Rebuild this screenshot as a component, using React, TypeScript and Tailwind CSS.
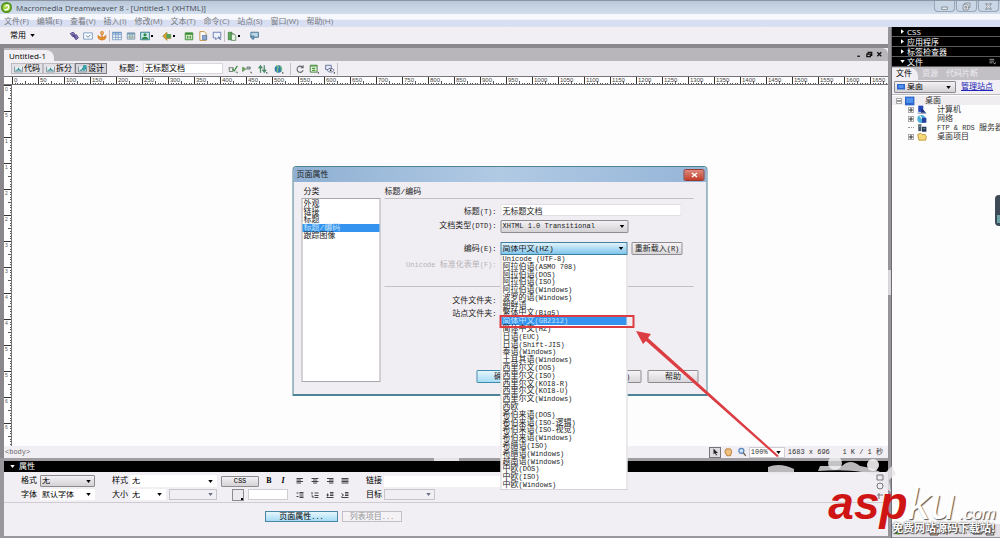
import { ReactNode } from 'react'
import clsx from 'clsx'

const menus = [
  '文件(F)',
  '编辑(E)',
  '查看(V)',
  '插入(I)',
  '修改(M)',
  '文本(T)',
  '命令(C)',
  '站点(S)',
  '窗口(W)',
  '帮助(H)',
]

const categories = ['外观', '链接', '标题', '标题/编码', '跟踪图像']

const encodings = [
  'Unicode (UTF-8)',
  '阿拉伯语(ASMO 708)',
  '阿拉伯语(DOS)',
  '阿拉伯语(ISO)',
  '阿拉伯语(Windows)',
  '波罗的语(Windows)',
  '朝鲜语',
  '繁体中文(Big5)',
  '简体中文(GB2312)',
  '简体中文(HZ)',
  '日语(EUC)',
  '日语(Shift-JIS)',
  '泰语(Windows)',
  '土耳其语(Windows)',
  '西里尔文(DOS)',
  '西里尔文(ISO)',
  '西里尔文(KOI8-R)',
  '西里尔文(KOI8-U)',
  '西里尔文(Windows)',
  '西欧',
  '希伯来语(DOS)',
  '希伯来语(ISO-逻辑)',
  '希伯来语(ISO-视觉)',
  '希伯来语(Windows)',
  '希腊语(ISO)',
  '希腊语(Windows)',
  '越南语(Windows)',
  '中欧(DOS)',
  '中欧(ISO)',
  '中欧(Windows)',
]

// Latin runs are set one size smaller than the Chinese ones
function Mixed({ children }: { children: string }) {
  return (
    <>
      {children.split(/([\x20-\x7e]+)/).map((part, i) =>
        i % 2 ? (
          <span key={i} className="text-[7px]">
            {part}
          </span>
        ) : (
          part
        ),
      )}
    </>
  )
}

function Icon({ children, className = 'size-[10px]' }: { children: ReactNode; className?: string }) {
  return (
    <svg viewBox="0 0 16 16" fill="none" className={clsx('shrink-0', className)} aria-hidden="true">
      {children}
    </svg>
  )
}

function IconButton({ label, children }: { label: string; children: ReactNode }) {
  return (
    <button aria-label={label} className="flex h-3 w-[14px] shrink-0 items-center justify-center">
      <Icon>{children}</Icon>
    </button>
  )
}

function Caret({ className = 'text-black' }: { className?: string }) {
  return (
    <svg viewBox="0 0 6 4" className={clsx('h-[3px] w-[5px] shrink-0', className)} aria-hidden="true">
      <path d="M0 0h6L3 4z" fill="currentColor" />
    </svg>
  )
}

function Dot() {
  return <span className="-ml-px mr-[7px] size-[2px] shrink-0 bg-black" />
}

function Select({
  id,
  label,
  options,
  className,
  fieldClass = 'border-transparent bg-white',
  disabled,
}: {
  id: string
  label?: string
  options: string[]
  className: string
  fieldClass?: string
  disabled?: boolean
}) {
  return (
    <div className={clsx('relative shrink-0', className)}>
      <select
        id={id}
        aria-label={label}
        disabled={disabled}
        className={clsx('block size-full appearance-none border pl-px leading-none', fieldClass)}
      >
        {options.map((o) => (
          <option key={o}>{o}</option>
        ))}
      </select>
      <span className="pointer-events-none absolute inset-y-0 right-1 flex items-center">
        <Caret className={disabled ? 'text-gray-500' : 'text-black'} />
      </span>
    </div>
  )
}

const grayField = 'border-[#8d8b8f] rounded-[1px] bg-linear-to-b from-[#f3f1f3] to-[#d5d2d6]'

function TitleBar() {
  return (
    <header className="flex h-[14px] shrink-0 items-center border-t border-[#8c96a3] bg-linear-to-b from-[#b9c8db] to-[#d3dfec] pl-px font-['Open_Sans','Noto_Sans',sans-serif] text-[8px] text-[#3f4854]">
      <Icon className="size-[11px]">
        <circle cx="8" cy="8" r="8" fill="#4f8f1c" />
        <circle cx="8" cy="8" r="5.5" fill="#a8d64a" />
        <path d="M5 11c4 1 7-1 6-6-2-1-4 0-4 2" stroke="#fff" strokeWidth="2" />
      </Icon>
      <h1 className="ml-1 flex-1">Macromedia Dreamweaver 8 - [Untitled-1 (XHTML)]</h1>
      <div className="flex gap-px self-start pr-px">
        <WindowButton label="最小化">
          <path d="M3 9h10v4H3z" />
        </WindowButton>
        <WindowButton label="还原">
          <path d="M5 5V2h9v8h-3M2 5h9v9H2zM5 8h3v3H5z" />
        </WindowButton>
        <WindowButton label="关闭">
          <path d="M3 3h3l2 3 2-3h3l-3 5 3 5h-3l-2-3-2 3H3l3-5z" />
        </WindowButton>
      </div>
    </header>
  )
}

function WindowButton({ label, children }: { label: string; children: ReactNode }) {
  return (
    <button
      aria-label={label}
      className="flex h-[11px] w-[21px] items-center justify-center rounded-b-sm border border-t-0 border-[#98a6b8] bg-[#c9d6e5]"
    >
      <Icon className="size-[9px]">
        <g fill="#fff" stroke="#6a7480" strokeWidth="1.4">
          {children}
        </g>
      </Icon>
    </button>
  )
}

function MenuBar() {
  return (
    <nav className="flex h-[13px] shrink-0 items-center gap-2 bg-linear-to-b from-[#f6f8fd] from-40% to-[#d9dff2] to-50% pl-1 font-['Open_Sans','Noto_Sans_CJK_SC',sans-serif] text-[8px] text-[#77797f]">
      {menus.map((m) => (
        <button key={m} className="whitespace-nowrap">
          {m}
        </button>
      ))}
    </nav>
  )
}

function Separator() {
  return <span className="h-3 w-px shrink-0 bg-[#c3c0c5]" />
}

function InsertBar() {
  return (
    <div className="flex h-[17px] shrink-0 items-center bg-[#f1eff3] pl-[10px] text-[8px]">
      <button className="flex w-[57px] items-center gap-1">
        常用 <Caret />
      </button>
      <IconButton label="超级链接">
        <path d="M2 4l5-2 3 4-4 3zM7 8l5-2 3 5-4 3z" fill="#9d8fc4" stroke="#4c3f86" strokeWidth="1.5" />
        <path d="M5 5l7 6" stroke="#4c3f86" strokeWidth="2" />
      </IconButton>
      <IconButton label="电子邮件链接">
        <path d="M1 3h14v10H1z" fill="#fff" stroke="#7b9cc4" strokeWidth="1.5" />
        <path d="M5 7l3 3 4-4" stroke="#4775ad" strokeWidth="1.5" />
      </IconButton>
      <IconButton label="命名锚记">
        <circle cx="8" cy="3" r="2" stroke="#d8832a" strokeWidth="2" />
        <path d="M8 5v8M2 8c0 8 12 8 12 0l-3 2H5z" stroke="#d8832a" strokeWidth="2" fill="#f0a541" />
      </IconButton>
      <Separator />
      <IconButton label="表格">
        <path d="M1 2h14v12H1zM1 6h14M1 10h14M6 2v12M10 2v12" fill="#fff" stroke="#6b93bd" strokeWidth="1.3" />
        <path d="M1 2h14v2H1z" fill="#5f8fc2" />
      </IconButton>
      <IconButton label="插入 Div 标签">
        <path d="M2 3h12v10H2z" fill="#dfe8ee" stroke="#6f8ba3" strokeWidth="1.3" />
        <path d="M2 3h12v3H2z" fill="#7aa0b8" />
        <path d="M5 8h6v3H5z" stroke="#58785c" />
      </IconButton>
      <IconButton label="图像">
        <path d="M1 2h14v12H1z" fill="#cfeae6" stroke="#347d92" strokeWidth="1.5" />
        <circle cx="8" cy="6" r="2.5" fill="#2d8a4d" />
        <path d="M3 13c0-5 10-5 10 0z" fill="#2d8a4d" />
      </IconButton>
      <Dot />
      <IconButton label="媒体">
        <path d="M1 8l7-6v4h6v6H8v3z" fill="#d9a032" stroke="#8f7a2c" />
        <path d="M7 5h7v6H7z" fill="#4fa45c" />
      </IconButton>
      <Dot />
      <IconButton label="日期">
        <path d="M2 3h12v11H2z" fill="#c7e8b8" stroke="#3d8c38" strokeWidth="1.5" />
        <path d="M2 3h12v3H2z" fill="#3d8c38" />
        <path d="M6 8v4M10 8v4" stroke="#2f6e2c" strokeWidth="1.5" />
      </IconButton>
      <IconButton label="服务器端包括">
        <path d="M3 1h7l3 3v11H3z" fill="#fff" stroke="#c58e34" strokeWidth="1.5" />
        <path d="M7 7h7v7H7z" fill="#8ba7cf" stroke="#4a6ca3" />
      </IconButton>
      <IconButton label="注释">
        <path d="M2 2h12v9H9l-3 3v-3H2z" fill="#eef3fb" stroke="#6a7fb0" strokeWidth="1.5" />
        <path d="M10 9l4 5" stroke="#6a7fb0" strokeWidth="2" />
      </IconButton>
      <Separator />
      <IconButton label="模板">
        <path d="M2 2h6v3h3v9H2z" fill="#5ea65a" stroke="#2f6f33" />
        <path d="M7 5h5l2 3v7H7z" fill="#e9f4e4" stroke="#2f6f33" />
      </IconButton>
      <Dot />
      <IconButton label="标签选择器">
        <path d="M3 2h12v8H3z" fill="#bcd6e8" stroke="#42738f" strokeWidth="1.5" />
        <path d="M2 8h6v5H5z" fill="#6b9bb8" stroke="#42738f" />
      </IconButton>
    </div>
  )
}

function ViewButton({ label, active }: { label: string; active?: boolean }) {
  return (
    <button
      className={clsx(
        'flex h-[11px] items-center gap-px border px-[2px]',
        active ? 'border-[#7f7d82] bg-[#d4d3d9]' : 'border-[#bdbbc0] bg-[#e3e1e5]',
      )}
    >
      <Icon className="size-[9px]">
        <path d="M1 5v9h14V5" fill="#e6f1f4" stroke="#74858f" strokeWidth="1.5" />
        <path d="M3 11h4l1-3 2 3h3" stroke="#2b8a92" strokeWidth="2" />
        {active && <path d="M9 2h6v8H9z" fill="#35a0a8" />}
      </Icon>
      {label}
    </button>
  )
}

function DocumentToolbar() {
  return (
    <div className="flex h-[15px] shrink-0 items-center bg-[#f1eff3] pl-[7px] text-[8px]">
      <div className="flex">
        <ViewButton label="代码" />
        <ViewButton label="拆分" />
        <ViewButton label="设计" active />
      </div>
      <label htmlFor="doc-title" className="ml-3 whitespace-nowrap">
        标题：
      </label>
      <input
        id="doc-title"
        defaultValue="无标题文档"
        className="mr-[3px] h-[11px] w-20 border border-[#dad8dc] bg-white px-px"
      />
      <IconButton label="无浏览器检查错误">
        <path d="M1 6h8M2 6v6h6V6M12 13h3v2" stroke="#6b7d6e" strokeWidth="1.5" />
        <path d="M7 8l3 3 5-8" stroke="#3d8b42" strokeWidth="2" />
      </IconButton>
      <IconButton label="验证标记">
        <path d="M1 5l5 3-5 4z" fill="#79ac5c" stroke="#3d7a3a" />
        <path d="M8 9V5h5v3H9M13 13h2v2" stroke="#5a6d62" strokeWidth="1.6" />
      </IconButton>
      <span className="w-[2px]" />
      <IconButton label="文件管理">
        <path d="M4 14V4M1 7l3-4 3 4M10 2v10M7 9l3 4 3-4" stroke="#4a8b69" strokeWidth="2" />
        <path d="M13 13h2v2h-2z" fill="#333" />
      </IconButton>
      <span className="w-[2px]" />
      <IconButton label="在浏览器中预览">
        <circle cx="7" cy="8" r="6" fill="#347dae" />
        <path d="M3 4c4-2 5 1 3 3s1 4-1 6M10 4c3 3 3 5 1 7" stroke="#7cc47a" strokeWidth="2" />
        <path d="M13 13h2v2h-2z" fill="#333" />
      </IconButton>
      <span className="w-1" />
      <Separator />
      <span className="w-[2px]" />
      <IconButton label="刷新设计视图">
        <path d="M12 5a5 5 0 1 0 1 5M13 2v4H9" stroke="#686a75" strokeWidth="1.8" />
      </IconButton>
      <IconButton label="视图选项">
        <path d="M2 2h11v11H2z" fill="#e4f1dc" stroke="#4c7f45" strokeWidth="1.5" />
        <path d="M2 3h11M5 7h5M5 10h5" stroke="#4c9a3e" strokeWidth="2" />
        <path d="M14 13h2v2h-2z" fill="#333" />
      </IconButton>
      <span className="w-[2px]" />
      <IconButton label="可视化助理">
        <path d="M1 2h9v7H1z" fill="#e6eaf5" stroke="#5c6a97" strokeWidth="1.4" />
        <ellipse cx="9" cy="10" rx="5" ry="3" fill="#fff" stroke="#5c6a97" strokeWidth="1.4" />
        <circle cx="9" cy="10" r="1.5" fill="#333" />
        <path d="M14 13h2v2h-2z" fill="#333" />
      </IconButton>
      <Separator />
    </div>
  )
}

const steps = Array.from({ length: 34 }, (_, i) => i)

function HorizontalRuler() {
  return (
    <svg className="h-[9px] w-full shrink-0 bg-white" aria-hidden="true">
      <defs>
        <pattern id="ticks-x" width="26" height="9" x="8" patternUnits="userSpaceOnUse">
          <path d="M.5 0v9" stroke="#333" />
          <path d="M3.5 7v2M5.5 7v2M8.5 7v2M10.5 7v2M13.5 5v4M16.5 7v2M18.5 7v2M21.5 7v2M23.5 7v2" stroke="#555" />
        </pattern>
      </defs>
      <rect x="8" width="100%" height="9" fill="url(#ticks-x)" />
      <path d="M0 .5h2000M0 8.5h2000" stroke="#77757a" />
      {steps.map((n) => (
        <text key={n} x={10 + n * 26} y="6" className="fill-[#444] font-['Liberation_Sans',sans-serif] text-[6px]">
          {n * 50}
        </text>
      ))}
    </svg>
  )
}

function VerticalRuler() {
  return (
    <svg className="h-full w-2 shrink-0 bg-white" aria-hidden="true">
      <defs>
        <pattern id="ticks-y" width="8" height="26" patternUnits="userSpaceOnUse">
          <path d="M0 .5h8" stroke="#333" />
          <path d="M6 3.5h2M6 5.5h2M6 8.5h2M6 10.5h2M4 13.5h4M6 16.5h2M6 18.5h2M6 21.5h2M6 23.5h2" stroke="#555" />
        </pattern>
      </defs>
      <rect width="8" height="100%" fill="url(#ticks-y)" />
      <path d="M7.500 0v2000" stroke="#77757a" />
      {steps.slice(0, 14).map((n) => (
        <text key={n} x="1" y={6 + n * 26} className="fill-[#555] font-['Liberation_Sans',sans-serif] text-[5px]">
          {String(n * 50)[0]}
        </text>
      ))}
    </svg>
  )
}

function StatusBar() {
  return (
    <div className="flex h-3 shrink-0 items-center bg-[#f1eff3] pr-[5px] text-[7px] text-[#333]">
      <button className="ml-px text-[#666]">&lt;body&gt;</button>
      <span className="flex-1" />
      <button aria-label="选取工具" className="flex h-[11px] w-3 items-center justify-center border border-[#77757a] bg-[#dddbe0]">
        <Icon className="size-2">
          <path d="M5 1v12l3-3 2 5 2-1-2-4h4z" fill="#222" />
        </Icon>
      </button>
      <IconButton label="手形工具">
        <path d="M3 7l2-4h7l2 4-2 7H6z" fill="#f0c080" stroke="#b97a35" strokeWidth="1.5" />
      </IconButton>
      <IconButton label="缩放工具">
        <circle cx="7" cy="6" r="4" fill="#cfe3f5" stroke="#5a86bd" strokeWidth="2" />
        <path d="M10 9l4 5" stroke="#6a5a4a" strokeWidth="2" />
      </IconButton>
      <Select
        id="zoom"
        label="缩放比率"
        options={['100%']}
        className="h-[11px] w-9"
        fieldClass="border-[#cfcdd1] bg-white"
      />
      <span className="ml-[3px] whitespace-pre">
        <Mixed>1683 x 696   1 K / 1 秒</Mixed>
      </span>
    </div>
  )
}

function DocumentWindow() {
  return (
    <main className="flex min-h-0 flex-1 flex-col border-t-4 border-l-4 border-[#8b888d]">
      <div className="flex h-[13px] shrink-0 items-end justify-between rounded-tr-md bg-[#b9b6bb]">
        <button className="h-[11px] rounded-tr-lg bg-[#f1eff3] pr-2 pl-[5px] font-['Open_Sans',sans-serif] text-[8px] leading-[11px]">
          Untitled-1
        </button>
        <div className="flex items-center gap-px self-center pr-1">
          {[
            ['最小化文档', 'M3 12h6'],
            ['还原文档', 'M2 7h8v6H2zM5 7V3h8v7h-3'],
            ['关闭文档', 'M3 3l9 9M12 3l-9 9'],
          ].map(([label, d]) => (
            <button key={label} aria-label={label} className="p-px">
              <Icon className="size-[7px]">
                <path d={d} stroke="#111" strokeWidth="3" />
              </Icon>
            </button>
          ))}
        </div>
      </div>
      <DocumentToolbar />
      <HorizontalRuler />
      <div className="flex min-h-0 flex-1 bg-[#fdfdfd]">
        <VerticalRuler />
      </div>
      <StatusBar />
    </main>
  )
}

function FormatButton({ label, d }: { label: string; d: string }) {
  return (
    <button aria-label={label} className="flex w-[15px] justify-center">
      <Icon className="size-2">
        <path d={d} stroke="#444" strokeWidth="2" />
      </Icon>
    </button>
  )
}

function PropertiesPanel() {
  return (
    <section className="shrink-0 border-b-2 border-l-4 border-[#9a979c] bg-[#f1eff3] text-[8px]">
      <div className="flex h-[3px] justify-center bg-[#a19ea3]">
        <span className="w-[25px] bg-[#e5e3e7]" />
      </div>
      <h2 className="flex h-[11px] items-center gap-1 bg-black pl-[6px] text-white">
        <Caret className="text-white" />
        属性
      </h2>
      <div className="flex h-[15px] items-center pt-[3px] pl-[17px]">
        <label htmlFor="format" className="w-[19px]">
          格式
        </label>
        <Select id="format" options={['无']} className="h-3 w-[55px]" fieldClass={grayField} />
        <label htmlFor="style" className="ml-[17px] w-[18px]">
          样式
        </label>
        <Select id="style" options={['无']} className="h-3 w-[87px]" />
        <button className="mr-[3px] ml-1 h-[11px] w-[38px] rounded-[1px] border border-[#8d8b8f] bg-linear-to-b from-[#f3f1f3] to-[#d5d2d6] text-[7px] leading-none">
          CSS
        </button>
        <button className="w-[14px] font-['Liberation_Serif',serif] font-bold">B</button>
        <button className="mr-[2px] w-[14px] font-['Liberation_Serif',serif] font-bold italic">I</button>
        <FormatButton label="左对齐" d="M1 3h13M1 6h9M1 9h13M1 12h9" />
        <FormatButton label="居中对齐" d="M1 3h14M4 6h8M1 9h14M4 12h8" />
        <FormatButton label="右对齐" d="M2 3h13M6 6h9M2 9h13M6 12h9" />
        <FormatButton label="两端对齐" d="M1 3h14M1 6h14M1 9h14M1 12h14" />
        <label htmlFor="link" className="ml-[14px] w-[18px]">
          链接
        </label>
        <input id="link" className="h-[11px] w-60 bg-white" />
      </div>
      <div className="flex h-[15px] items-center pl-[17px]">
        <label htmlFor="font" className="w-[19px]">
          字体
        </label>
        <Select id="font" options={['默认字体']} className="h-[11px] w-[55px]" />
        <label htmlFor="size" className="ml-[17px] w-[18px]">
          大小
        </label>
        <Select id="size" options={['无']} className="h-[11px] w-9" />
        <Select
          id="unit"
          label="单位"
          options={['']}
          className="ml-[3px] h-[11px] w-12"
          fieldClass="border-[#c8c5ca] bg-[#f1eff3]"
          disabled
        />
        <button
          aria-label="文本颜色"
          className="ml-[15px] flex size-3 items-end justify-end border border-[#8d8b8f] bg-[#eceaee]"
        >
          <span className="size-[2px] bg-black" />
        </button>
        <input aria-label="颜色值" className="mr-1 ml-1 h-[11px] w-10 border border-[#cfcdd1] bg-white" />
        <FormatButton label="项目列表" d="M1 4h4M7 3h8M7 6h8M1 11h4M7 10h8M7 13h8" />
        <FormatButton label="编号列表" d="M2 2v5M7 4h8M1 10h3v4M7 9h8M7 13h8" />
        <FormatButton label="文本凸出" d="M1 8h5M3 5v6M8 3h7M8 6h7M8 9h7M1 13h14" />
        <FormatButton label="文本缩进" d="M1 5l4 3-4 3M8 3h7M8 6h7M8 9h7M1 13h14" />
        <label htmlFor="target" className="ml-[14px] w-[18px]">
          目标
        </label>
        <Select
          id="target"
          options={['']}
          className="h-[11px] w-[51px]"
          fieldClass="border-[#c8c5ca] bg-[#f1eff3]"
          disabled
        />
      </div>
      <div className="flex h-[34px] gap-1 border-t border-[#cfccd1] pt-2 pl-[261px]">
        <button className="h-[11px] w-[73px] border border-[#4b87a4] bg-linear-to-b from-[#e6f6fd] to-[#a5dcf5] leading-none">
          <Mixed>页面属性...</Mixed>
        </button>
        <button
          disabled
          className="h-[11px] w-[60px] border border-[#c3c0c5] bg-[#f4f2f5] leading-none text-[#97959a]"
        >
          <Mixed>列表项目...</Mixed>
        </button>
      </div>
    </section>
  )
}

function TreeRow({ label, icon, box, nested = true }: { label: string; icon: ReactNode; box?: string; nested?: boolean }) {
  return (
    <li
      className={clsx(
        'flex h-[9px] items-center gap-[3px] whitespace-nowrap',
        nested ? 'pl-4' : 'bg-[#efedf0] pl-1',
      )}
    >
      {box ? (
        <button
          aria-label={`展开 ${label}`}
          className="flex size-[6px] shrink-0 items-center justify-center border border-[#aaa] bg-white"
        >
          <Icon className="size-1">
            <path d={box === '+' ? 'M0 8h16M8 0v16' : 'M0 8h16'} stroke="#333" strokeWidth="4" />
          </Icon>
        </button>
      ) : (
        <span className="w-[6px] shrink-0 border-t border-dotted border-[#999]" />
      )}
      <Icon>{icon}</Icon>
      <span className="ml-[7px]">
        <Mixed>{label}</Mixed>
      </span>
    </li>
  )
}

function SidePanel() {
  return (
    <aside className="flex w-[112px] shrink-0 overflow-hidden text-[8px]">
      <div className="flex w-1 shrink-0 flex-col justify-center border-r border-[#6f6d72] bg-[#97949a]">
        <span className="h-[25px] w-full bg-[#d8d6da]" />
      </div>
      <div className="flex min-w-0 flex-1 flex-col bg-[#fdfdfd]">
        {['CSS', '应用程序', '标签检查器', '文件'].map((name, i) => (
          <h2
            key={name}
            className="flex h-[10px] shrink-0 items-center border-b border-[#5a5a5a] bg-black pl-2 text-white"
          >
            <Caret className={clsx('mr-[2px]', i < 3 && '-rotate-90')} />
            <span className="flex-1 font-['Open_Sans','Noto_Sans_CJK_SC',sans-serif]">{name}</span>
            {i === 3 && (
              <Icon className="mr-1 size-[7px]">
                <path d="M1 3h11M1 7h11M1 11h7M10 10l3 4 2-4" stroke="#ddd" strokeWidth="1.5" />
              </Icon>
            )}
          </h2>
        ))}
        <div role="tablist" className="flex h-[13px] shrink-0 items-end gap-1 bg-[#c3c0c5] text-[#eeecf0]">
          <button
            role="tab"
            aria-selected="true"
            className="h-3 rounded-tr-lg bg-[#f1eff3] pr-[6px] pl-1 leading-3 text-black"
          >
            文件
          </button>
          <button role="tab" aria-selected="false" className="h-3 leading-3">
            资源
          </button>
          <button role="tab" aria-selected="false" className="ml-1 h-3 leading-3">
            代码片断
          </button>
        </div>
        <div className="flex h-[15px] shrink-0 items-center gap-[5px] border-b border-[#bbb] bg-[#f1eff3] pl-[2px]">
          <div className="flex h-3 w-[62px] items-center rounded-[1px] border border-[#8d8b8f] bg-linear-to-b from-[#f3f1f3] to-[#d5d2d6] pl-[2px]">
            <Icon className="size-2">
              <path d="M0 2h16v11H0z" fill="#2d64c8" />
              <path d="M3 4h10v6H3z" fill="#4f93ef" />
            </Icon>
            <Select id="site" label="站点" options={['桌面']} className="h-full flex-1" fieldClass="border-transparent bg-transparent" />
          </div>
          <a href="#sites" className="whitespace-nowrap text-[#2222b4] underline">
            管理站点
          </a>
        </div>
        <ul className="pt-px text-[#333]">
          <TreeRow
            label="桌面"
            box="-"
            nested={false}
            icon={
              <>
                <path d="M0 1h15v14H0z" fill="#2d64c8" />
                <path d="M2 3h11v8H2z" fill="#4f93ef" />
              </>
            }
          />
          <TreeRow
            label="计算机"
            box="+"
            icon={
              <>
                <path d="M2 1h8v10H2z" fill="#2446b8" />
                <path d="M8 5l7 8H6z" fill="#1c2f78" />
                <path d="M1 13h13" stroke="#8b9ab8" strokeWidth="2" />
              </>
            }
          />
          <TreeRow
            label="网络"
            box="+"
            icon={
              <>
                <circle cx="7" cy="8" r="6.500" fill="#4db0dc" />
                <path d="M4 3c4 1 1 4 5 5" stroke="#d5f0d8" strokeWidth="2" />
                <path d="M8 6h7v8H8z" fill="#2340a0" />
              </>
            }
          />
          <TreeRow
            label="FTP & RDS 服务器"
            icon={
              <>
                <path d="M2 2h5v11H2z" fill="#4a5568" />
                <path d="M8 6h7v8H8z" fill="#263a5c" />
                <path d="M3 5h3M10 9h3" stroke="#9fe0c8" />
              </>
            }
          />
          <TreeRow
            label="桌面项目"
            box="+"
            icon={
              <path d="M1 4l5-2 2 2h5l2 3-1 6H3z" fill="#f5d877" stroke="#b98f2c" strokeWidth="1.3" />
            }
          />
        </ul>
        <div className="mt-auto flex h-[14px] items-center justify-between border-b border-[#9a979c] bg-[#e4e2e6] px-[2px]">
          <Icon className="size-2">
            <circle cx="8" cy="8" r="7" fill="#5a9a2c" />
            <circle cx="8" cy="6" r="3" fill="#c3e07a" />
          </Icon>
          <svg viewBox="0 0 70 10" className="h-[10px] w-[70px]" fill="none" stroke="#555" aria-hidden="true">
            <path d="M2 1h8v8H2z" fill="#e8b48c" />
            <path d="M16 3h7v3h-7zM19 1v8M31 2c-3 3 0 6 3 5M38 7h1M45 3h9v5h-9zM47 5h5M60 2h4v3h-4zM58 9c0-4 8-4 8 0z" />
          </svg>
        </div>
      </div>
    </aside>
  )
}

function FieldLabel({ htmlFor, children, muted }: { htmlFor?: string; children: string; muted?: boolean }) {
  return (
    <label
      htmlFor={htmlFor}
      className={clsx('w-28 shrink-0 text-right whitespace-nowrap', muted && 'text-[#b5b2b7]')}
    >
      <Mixed>{children}</Mixed>
    </label>
  )
}

function EncodingList() {
  return (
    <ul
      role="listbox"
      aria-label="编码"
      className="absolute top-full left-0 flex h-[235px] w-[127px] flex-col border border-t-0 border-[#d5d3d7] bg-white"
    >
      {encodings.map((name) => {
        const selected = name === '简体中文(GB2312)'
        return (
          <li
            key={name}
            role="option"
            aria-selected={selected}
            className={clsx(
              'flex min-h-0 flex-1 items-center pl-px whitespace-pre',
              selected && 'bg-[#3393ee] text-[#c5e2fb]',
            )}
          >
            <span className="leading-none">
              <Mixed>{name}</Mixed>
            </span>
          </li>
        )
      })}
      <li role="presentation" className="absolute top-[60px] -left-[2px] h-[13px] w-[135px] border-2 border-[#dc3d42]" />
    </ul>
  )
}

function PageProperties() {
  return (
    <div
      role="dialog"
      aria-labelledby="dialog-title"
      className="absolute top-[166px] left-1/2 flex h-[230px] w-[415px] -translate-x-1/2 flex-col rounded-t border border-b-2 border-[#4f8494] bg-[#f1eef3] text-[8px] leading-none text-[#222]"
    >
      <div className="flex h-[15px] shrink-0 items-start justify-between rounded-t bg-linear-to-r from-[#8fb0d3] via-[#b1cae4] to-[#95b5d8] pr-[2px] pl-[3px]">
        <h2 id="dialog-title" className="self-center">
          页面属性
        </h2>
        <button
          aria-label="关闭"
          className="mt-[2px] flex h-3 w-[21px] items-center justify-center rounded-[2px] border border-[#9a3c35] bg-linear-to-b from-[#dd8a7b] to-[#c33c2a]"
        >
          <Icon className="size-2">
            <path d="M3 4l10 8M13 4L3 12" stroke="#fff" strokeWidth="3" />
          </Icon>
        </button>
      </div>
      <div className="flex flex-1 gap-1 pr-[13px] pl-2">
        <div className="flex w-[79px] shrink-0 flex-col">
          <span className="pt-[6px] pb-[2px] pl-[2px]">分类</span>
          <ul role="listbox" aria-label="分类" className="h-[184px] border border-[#a9a7ac] bg-white pt-px">
            {categories.map((name, i) => (
              <li
                key={name}
                role="option"
                aria-selected={i === 3}
                className={clsx('h-2 pl-px', i === 3 && 'bg-[#3393ee] text-[#c5e2fb]')}
              >
                {name}
              </li>
            ))}
          </ul>
        </div>
        <div className="flex min-w-0 flex-1 flex-col">
          <h3 className="border-b border-[#c3c0c5] pt-[6px] pb-[2px]">标题/编码</h3>
          <div className="flex h-[17px] items-end gap-1">
            <FieldLabel htmlFor="page-title">标题(T):</FieldLabel>
            <input
              id="page-title"
              defaultValue="无标题文档"
              className="h-3 w-[181px] border border-[#e2e0e4] bg-white px-px"
            />
          </div>
          <div className="flex h-[17px] items-center gap-1 pt-[3px]">
            <FieldLabel htmlFor="dtd">文档类型(DTD):</FieldLabel>
            <Select
              id="dtd"
              options={['XHTML 1.0 Transitional']}
              className="h-[13px] w-32 text-[7px]"
              fieldClass={grayField}
            />
          </div>
          <div className="mt-2 flex h-[15px] items-center gap-1">
            <FieldLabel htmlFor="encoding">编码(E):</FieldLabel>
            <div className="relative z-10">
              <Select
                id="encoding"
                options={['简体中文(HZ)']}
                className="h-[13px] w-[127px]"
                fieldClass="border-[#3f7fa0] bg-linear-to-b from-[#e0f3fc] to-[#7cc4ea]"
              />
              <EncodingList />
            </div>
            <button className="h-[13px] w-[51px] rounded-[1px] border border-[#8d8b8f] bg-linear-to-b from-[#f6f4f6] to-[#d9d6da] whitespace-nowrap">
              <Mixed>重新载入(R)</Mixed>
            </button>
          </div>
          <div className="flex h-[18px] items-center">
            <FieldLabel muted>Unicode 标准化表单(F):</FieldLabel>
          </div>
          <div className="mt-3 border-t border-[#c3c0c5] pt-[7px]">
            <div className="flex h-[13px] items-center">
              <FieldLabel>文件文件夹:</FieldLabel>
            </div>
            <div className="flex h-[13px] items-center">
              <FieldLabel>站点文件夹:</FieldLabel>
            </div>
          </div>
          <div className="mt-auto mb-[11px] -mr-[5px] flex justify-end gap-[6px]">
            {['确定', '取消', '应用(A)', '帮助'].map((name, i) => (
              <button
                key={name}
                className={clsx(
                  'h-[13px] w-[51px] rounded-[1px] border bg-linear-to-b',
                  i === 0 ? 'border-[#3f8bab] from-[#e6f6fd] to-[#a5dcf5]' : 'border-[#8d8b8f] from-[#f6f4f6] to-[#d9d6da]',
                )}
              >
                <Mixed>{name}</Mixed>
              </button>
            ))}
          </div>
        </div>
      </div>
    </div>
  )
}

function Arrow() {
  return (
    <svg viewBox="0 0 146 130" className="pointer-events-none absolute top-[329px] left-[636px] h-[130px] w-[146px]" aria-hidden="true">
      <path d="M0 2l15 3-3 4 131 118-2 1L10 12l-3 3z" fill="#dc3d42" />
    </svg>
  )
}

function Watermark() {
  return (
    <div className="pointer-events-none absolute right-0 bottom-0 w-60">
      <svg viewBox="0 0 140 44" className="ml-1 h-11 w-[140px]" aria-hidden="true">
        <path d="M4 12q12-5 26 2v5H4zM56 11h22q8-8 18 0 14 2 24 8l8-8 4 8-7 6 2 12-7-5-4-10q-20-9-62-6z" fill="#e8e6ea" opacity=".8" />
        <circle cx="71" cy="8" r="7" fill="#f4f2f5" opacity=".8" />
        <circle cx="109" cy="10" r="6" fill="#f4f2f5" opacity=".9" />
        <path d="M113 20h6v5h-6zM113 31a3 3 0 1 0 6 0 3 3 0 1 0-6 0M113 40h6M115 38v6" stroke="#77757a" fill="none" />
      </svg>
      <div className="-mt-[22px] flex items-baseline justify-end pr-1 font-['Liberation_Sans',sans-serif] italic">
        <span className="text-[46px] leading-[52px] font-bold text-[#cf1414]">asp</span>
        <span className="text-[45px] leading-[52px] text-white [text-shadow:1px_1px_1px_#555]">ku</span>
        <span className="ml-1 text-[17px] text-white [text-shadow:1px_1px_1px_#444]">.com</span>
      </div>
      <p className="-mt-[10px] pr-[5px] pb-[4px] text-right font-['Noto_Sans_CJK_SC',sans-serif] text-[11px] leading-[14px] font-bold text-white [text-shadow:0_0_2px_#333,1px_1px_1px_#444]">
        免费网站源码下载站!
      </p>
    </div>
  )
}

export default function App() {
  return (
    <div className="relative flex h-screen flex-col overflow-hidden bg-[#f1eff3] font-['Liberation_Mono','Noto_Sans_CJK_SC',monospace] text-black">
      <TitleBar />
      <MenuBar />
      <div className="flex min-h-0 flex-1">
        <div className="flex min-w-0 flex-1 flex-col">
          <InsertBar />
          <DocumentWindow />
          <PropertiesPanel />
        </div>
        <SidePanel />
      </div>
      <PageProperties />
      <Arrow />
      <button
        aria-label="展开侧栏"
        className="absolute top-[195px] right-0 flex h-[31px] w-[5px] items-end rounded-l-sm bg-[#3f4a57] pb-[3px] pl-[2px]"
      >
        <span className="h-2 w-[3px] bg-[#6fa3a8]" />
      </button>
      <Watermark />
    </div>
  )
}
